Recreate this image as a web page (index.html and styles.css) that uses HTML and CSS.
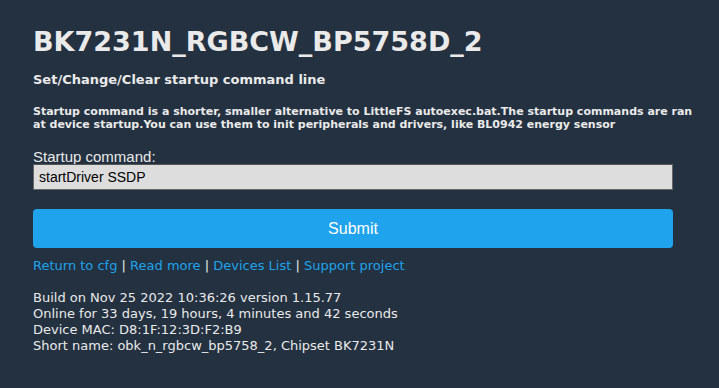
FILE: index.html
```html
<!DOCTYPE html>
<html lang="en">
<head>
    <meta charset="UTF-8">
    <meta name="viewport" content="width=device-width, initial-scale=1.0">
    <title>BK7231N_RGBCW_BP5758D_2</title>
    <link rel="stylesheet" href="styles.css">
</head>
<body>
    <div class="page">
        <h1 class="device-name">BK7231N_RGBCW_BP5758D_2</h1>

        <h5 class="section-title">Set/Change/Clear startup command line</h5>
        <h6 class="section-note">Startup command is a shorter, smaller alternative to LittleFS autoexec.bat.The startup commands are ran at device startup.You can use them to init peripherals and drivers, like BL0942 energy sensor</h6>

        <form class="startup-form">
            <label for="data" class="field-label">Startup command:</label>
            <input type="text" id="data" name="data" value="startDriver SSDP">
            <button type="submit" class="submit-button">Submit</button>
        </form>

        <div class="nav-links">
            <a href="#">Return to cfg</a> | <a href="#">Read more</a> | <a href="#">Devices List</a> | <a href="#">Support project</a>
        </div>

        <div class="build-info">
            Build on Nov 25 2022 10:36:26 version 1.15.77<br>
            Online for 33 days, 19 hours, 4 minutes and 42 seconds<br>
            Device MAC: D8:1F:12:3D:F2:B9<br>
            Short name: obk_n_rgbcw_bp5758_2, Chipset BK7231N
        </div>
    </div>
</body>
</html>
```

FILE: styles.css
```css
body {
    margin: 0;
    background-color: #233140;
    color: #eaeaea;
    font-family: 'DejaVu Sans', Verdana, sans-serif;
}

.page {
    width: 640px;
    padding: 22px 0 0 33px;
}

.device-name {
    margin: 0;
    font-size: 27px;
    line-height: 40px;
    font-weight: bold;
}

.section-title {
    margin: 10px 0 0;
    font-size: 13px;
    line-height: 16px;
}

.section-note {
    margin: 17px 0 0;
    font-size: 11px;
    line-height: 13px;
    width: 665px;
}

.startup-form {
    margin-top: 19px;
    display: flex;
    flex-direction: column;
}

.field-label {
    font-family: 'Liberation Sans', Arial, sans-serif;
    font-size: 15px;
    line-height: 14px;
}

.startup-form input {
    box-sizing: border-box;
    width: 640px;
    height: 26px;
    margin: 0;
    padding: 0 5px;
    background-color: #dddddd;
    border: 1px solid #666;
    border-top-color: #555;
    font-family: 'Liberation Sans', Arial, sans-serif;
    font-size: 14px;
    color: #000;
}

.submit-button {
    margin-top: 19px;
    height: 39px;
    width: 640px;
    border: none;
    border-radius: 4px;
    background-color: #1fa3ec;
    color: #fff;
    font-family: 'Liberation Sans', Arial, sans-serif;
    font-size: 16px;
    cursor: pointer;
}

.nav-links {
    margin-top: 10px;
    font-size: 13px;
    line-height: 16px;
}

.nav-links a {
    color: #1fa3ec;
    text-decoration: none;
}

.build-info {
    margin-top: 16px;
    font-size: 13px;
    line-height: 16px;
}
```
